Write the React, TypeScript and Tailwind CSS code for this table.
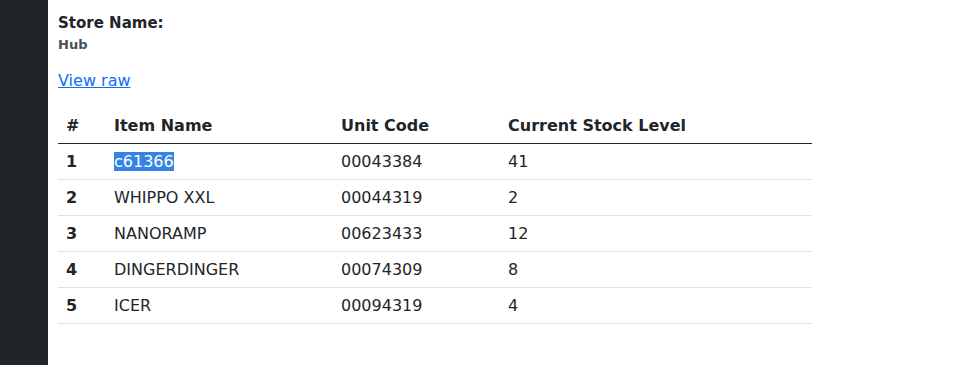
import React from 'react';

const rows = [
  { n: 1, name: 'c61366', code: '00043384', stock: '41', selected: true },
  { n: 2, name: 'WHIPPO XXL', code: '00044319', stock: '2' },
  { n: 3, name: 'NANORAMP', code: '00623433', stock: '12' },
  { n: 4, name: 'DINGERDINGER', code: '00074309', stock: '8' },
  { n: 5, name: 'ICER', code: '00094319', stock: '4' },
];

export default function App() {
  return (
    <div className="flex h-[365px] bg-white text-[#212529] font-['DejaVu_Sans',sans-serif] overflow-hidden">
      {/* sidebar */}
      <div className="w-12 shrink-0 bg-[#212529]" />

      <div className="flex-1 px-[10px] pt-3">
        <div className="text-[15px] font-bold leading-[22px]">Store Name:</div>
        <div className="text-[13px] font-bold leading-5 text-[#495057] mt-px">Hub</div>

        <a href="#" className="block w-fit mt-[14px] text-base leading-6 text-[#0d6efd] underline">View raw</a>

        <table className="mt-[14px] w-[754px] text-base border-collapse">
          <thead>
            <tr className="h-9 border-b border-[#212529] text-left">
              <th className="w-12 px-2 pt-[2px] font-bold">#</th>
              <th className="w-[227px] px-2 pt-[2px] font-bold">Item Name</th>
              <th className="w-[167px] px-2 pt-[2px] font-bold">Unit Code</th>
              <th className="px-2 pt-[2px] font-bold">Current Stock Level</th>
            </tr>
          </thead>
          <tbody>
            {rows.map(r => (
              <tr key={r.n} className="h-9 border-b border-[#dee2e6]">
                <td className="px-2 pt-[2px] font-bold">{r.n}</td>
                <td className="px-2 pt-[2px]">
                  {r.selected ? <span className="bg-[#3584e4] text-white">{r.name}</span> : r.name}
                </td>
                <td className="px-2 pt-[2px]">{r.code}</td>
                <td className="px-2 pt-[2px]">{r.stock}</td>
              </tr>
            ))}
          </tbody>
        </table>
      </div>
    </div>
  );
}
